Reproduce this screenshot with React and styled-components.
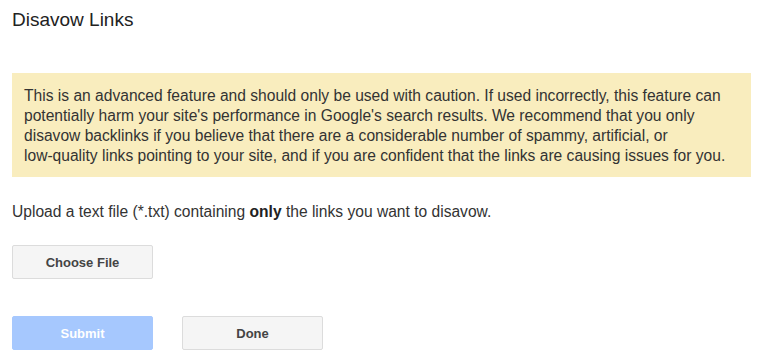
import styled, { createGlobalStyle } from "styled-components";

const GlobalStyle = createGlobalStyle`
  body {
    margin: 0;
    background: #fff;
    font-family: Arial, "Liberation Sans", sans-serif;
    color: #222;
  }
`;

const Page = styled.div`
  padding: 0 11px 0 12px;
`;

const Title = styled.h1`
  margin: 8px 0 0;
  font-size: 19px;
  line-height: 24px;
  font-weight: normal;
  color: #222;
`;

const Warning = styled.div`
  margin-top: 41px;
  background: #f9edbe;
  padding: 13px 12px 11px;
  font-size: 15.6px;
  line-height: 20px;
  color: #333;
  white-space: nowrap;
`;

const Note = styled.p`
  margin: 25px 0 0;
  font-size: 15.6px;
  line-height: 20px;
  color: #333;
  b {
    color: #222;
  }
`;

const Row = styled.div`
  display: flex;
  gap: 29px;
  margin-top: ${(p) => p.$top}px;
`;

const Button = styled.button`
  width: 141px;
  height: 34px;
  border: 1px solid ${(p) => (p.$primary ? "#a6c8fe" : "#dcdcdc")};
  border-radius: 2px;
  background: ${(p) => (p.$primary ? "#a6c8fe" : "#f5f5f5")};
  color: ${(p) => (p.$primary ? "#fff" : "#444")};
  font-family: Arial, "Liberation Sans", sans-serif;
  font-size: 13px;
  font-weight: bold;
  padding: 0;
  cursor: ${(p) => (p.disabled ? "default" : "pointer")};
`;

export default function App() {
  return (
    <Page>
      <GlobalStyle />
      <Title>Disavow Links</Title>
      <Warning>
        This is an advanced feature and should only be used with caution. If used incorrectly, this feature can
        <br />
        potentially harm your site's performance in Google's search results. We recommend that you only
        <br />
        disavow backlinks if you believe that there are a considerable number of spammy, artificial, or
        <br />
        low-quality links pointing to your site, and if you are confident that the links are causing issues for you.
      </Warning>
      <Note>
        Upload a text file (*.txt) containing <b>only</b> the links you want to disavow.
      </Note>
      <Row $top={23}>
        <Button>Choose File</Button>
      </Row>
      <Row $top={37}>
        <Button $primary disabled>
          Submit
        </Button>
        <Button>Done</Button>
      </Row>
    </Page>
  );
}
